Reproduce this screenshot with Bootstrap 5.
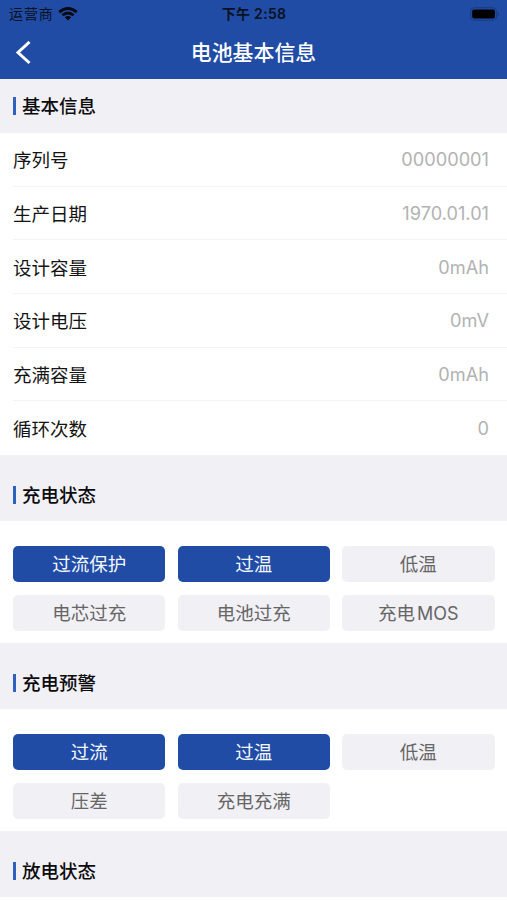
<!DOCTYPE html>
<html lang="zh-CN">
<head>
<meta charset="utf-8">
<meta name="viewport" content="width=device-width, initial-scale=1">
<title>电池基本信息</title>
<link rel="stylesheet" href="https://cdn.jsdelivr.net/npm/bootstrap@5.3.0/dist/css/bootstrap.min.css">
<style>
  :root { --brand: #204ca6; --band: #f1f0f5; }
  body { font-family: Inter, "Noto Sans CJK SC", sans-serif; font-size: 18.5px; line-height: 1.2; color: #141414; height: 900px; overflow: hidden; }
  .app-header { background: var(--brand); height: 79px; }
  .status-line { height: 27px; padding: 1px 8px 0 9px; font-size: 14px; color: #0a1120; }
  .status-line > * { flex: 1 1 0; }
  .carrier { letter-spacing: .9px; }
  .clock { font-weight: 600; letter-spacing: .3px; padding-top: 1px; }
  .title-line { height: 52px; padding: 0 15px; }
  .title-line > .side { width: 18px; }
  .page-title { font-size: 20.9px; font-weight: 500; color: #fff; }
  .band { background: var(--band); height: 65.8px; padding: 13px 13px 0; }
  .band-first { height: 54px; padding-top: 0; }
  .band h2 { font-size: 18.5px; font-weight: 500; line-height: 18px; color: #0c0c0e; border-left: 3px solid #2f62bd; padding-left: 6px; }
  .info-row { height: 53.7px; margin-left: 13px; padding: 2px 18px 0 0; border-bottom: 1px solid #f4f4f6; }
  .info-row:last-child { border-bottom: 0; }
  .info-value { color: #b2b2b2; font-size: 18.2px; }
  .flags { display: grid; grid-template-columns: repeat(3, 1fr); gap: 12.2px; padding: 24.6px 12.5px 12px 13px; }
  .flag { height: 36.8px; padding-top: 1px; border-radius: 5px; background: var(--band); color: #666; }
  .flag.on { background: var(--brand); color: #f4f7ff; }
  .latin { font-size: 18px; margin-left: 2px; }
</style>
</head>
<body class="bg-white">
<header class="app-header">
  <div class="status-line d-flex align-items-center">
    <div class="d-flex align-items-center gap-1">
      <span class="carrier">运营商</span>
      <svg width="20" height="14" viewBox="0 0 20 14" fill="none" stroke="#050911" stroke-width="2.8">
        <path d="M1.2 5.1Q10-2.2 18.8 5.1M4.4 8.3Q10 3.6 15.6 8.3"/>
        <path d="M10 13.4 6.8 10.3Q10 7.8 13.2 10.3Z" fill="#050911" stroke="none"/>
      </svg>
    </div>
    <div class="clock text-center text-nowrap">下午 2:58</div>
    <div class="d-flex justify-content-end">
      <svg width="29" height="14" viewBox="0 0 29 14">
        <rect x=".6" y=".7" width="26" height="12.6" rx="3.8" fill="none" stroke="#183a80"/>
        <rect x="2.2" y="2.5" width="22.8" height="9" rx="2" fill="#000"/>
        <path d="M27.7 5v4q1.3-.6 1.3-2t-1.3-2Z" fill="#183a80"/>
      </svg>
    </div>
  </div>
  <div class="title-line d-flex align-items-center justify-content-between">
    <a class="side d-flex" href="#" aria-label="返回">
      <svg width="17" height="24" viewBox="0 0 17 24" fill="none" stroke="#fff" stroke-width="3"><path d="M14.5 1 3 11.5 14.5 22"/></svg>
    </a>
    <h1 class="page-title m-0">电池基本信息</h1>
    <span class="side"></span>
  </div>
</header>
<main>
  <section>
    <div class="band band-first d-flex align-items-center"><h2 class="m-0">基本信息</h2></div>
    <div>
      <div class="info-row d-flex align-items-center justify-content-between"><span>序列号</span><span class="info-value">00000001</span></div>
      <div class="info-row d-flex align-items-center justify-content-between"><span>生产日期</span><span class="info-value">1970.01.01</span></div>
      <div class="info-row d-flex align-items-center justify-content-between"><span>设计容量</span><span class="info-value">0mAh</span></div>
      <div class="info-row d-flex align-items-center justify-content-between"><span>设计电压</span><span class="info-value">0mV</span></div>
      <div class="info-row d-flex align-items-center justify-content-between"><span>充满容量</span><span class="info-value">0mAh</span></div>
      <div class="info-row d-flex align-items-center justify-content-between"><span>循环次数</span><span class="info-value">0</span></div>
    </div>
  </section>
  <section>
    <div class="band d-flex align-items-center"><h2 class="m-0">充电状态</h2></div>
    <div class="flags">
      <div class="flag on d-flex align-items-center justify-content-center">过流保护</div>
      <div class="flag on d-flex align-items-center justify-content-center">过温</div>
      <div class="flag d-flex align-items-center justify-content-center">低温</div>
      <div class="flag d-flex align-items-center justify-content-center">电芯过充</div>
      <div class="flag d-flex align-items-center justify-content-center">电池过充</div>
      <div class="flag d-flex align-items-center justify-content-center">充电<span class="latin">MOS</span></div>
    </div>
  </section>
  <section>
    <div class="band d-flex align-items-center"><h2 class="m-0">充电预警</h2></div>
    <div class="flags">
      <div class="flag on d-flex align-items-center justify-content-center">过流</div>
      <div class="flag on d-flex align-items-center justify-content-center">过温</div>
      <div class="flag d-flex align-items-center justify-content-center">低温</div>
      <div class="flag d-flex align-items-center justify-content-center">压差</div>
      <div class="flag d-flex align-items-center justify-content-center">充电充满</div>
    </div>
  </section>
  <section>
    <div class="band d-flex align-items-center"><h2 class="m-0">放电状态</h2></div>
  </section>
</main>
<script src="https://cdn.jsdelivr.net/npm/bootstrap@5.3.0/dist/js/bootstrap.bundle.min.js"></script>
</body>
</html>
